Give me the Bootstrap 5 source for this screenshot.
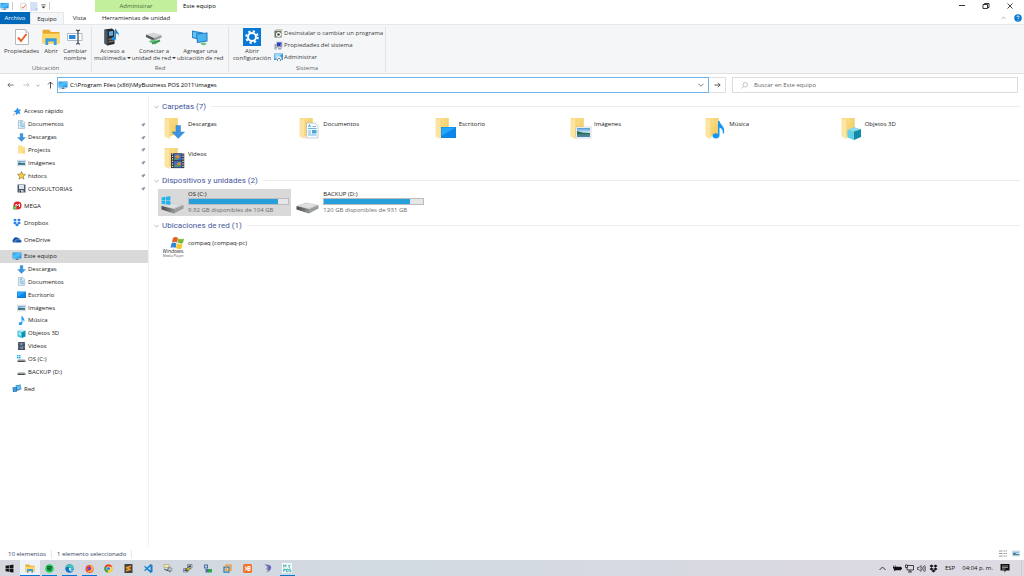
<!DOCTYPE html>
<html lang="es">
<head>
<meta charset="utf-8">
<meta name="viewport" content="width=device-width, initial-scale=1">
<title>Este equipo</title>
<link href="https://cdn.jsdelivr.net/npm/bootstrap@5.3.0/dist/css/bootstrap.min.css" rel="stylesheet">
<style>
  body { font-family: "Open Sans", "Noto Sans", sans-serif; font-size: 6px; line-height: 8px; color: #1a1a1a; background: #fff; }
  svg { display: block; flex: none; }
  button, input { font: inherit; color: inherit; }
  a { color: inherit; text-decoration: none; }
  h2 { font-family: Roboto, "Open Sans", sans-serif; font-size: 8px; line-height: 13px; font-weight: 400; color: #3f559d; margin: 0; }
  .plain { border: 0; background: transparent; padding: 0; }

  .titlebar, .tabs { height: 12px; }
  .quick { width: 95px; gap: 3px; }
  .ctx { width: 82px; background: #c1ef9b; color: #4b6a38; }
  .ctx-tab { width: 82px; }
  .win-title { padding-left: 6px; }
  .win-controls { padding-right: 2px; }
  .win-controls button { width: 24px; height: 12px; }
  .sep { width: 1px; height: 8px; background: #ccc; }
  .tab-file { width: 30px; background: #0068b8; color: #fff; }
  .tab-on { width: 34px; background: #f5f6f7; border: 1px solid #e4e5e6; border-bottom: 0; line-height: 10px; }
  .tab-view { width: 31px; }

  .ribbon { height: 50px; background: #f5f6f7; border-top: 1px solid #e6e7e8; border-bottom: 1px solid #e0e1e2; color: #3c3c3c; }
  .rgroup { border-right: 1px solid #e2e3e4; margin: 2px 0 1px; }
  .rbtn { line-height: 7px; display: flex; flex-direction: column; align-items: center; text-align: center; white-space: nowrap; padding-top: 1px; }
  .rbtn svg { margin-bottom: 2px; }
  .caret { display: inline-block; border: 2px solid transparent; border-top-color: #333; border-bottom: 0; vertical-align: 1px; margin-left: 1px; }
  .rlabel { color: #666; text-align: center; line-height: 8px; }
  .rrow { padding-left: 4px; gap: 3px; }
  .g1 { width: 92px; } .g2 { width: 137px; } .g3 { width: 157px; }
  .g2 .rrow { padding-left: 2px; gap: 1px; }
  .small-cmd { height: 12px; gap: 1px; }

  .addressbar { height: 23px; padding: 0 6px 1px 4px; }
  .nav-ico { width: 12px; height: 14px; }
  .nav-ico.fwd { margin-left: 4px; }
  .pathbox { height: 16px; border: 1px solid #6db5ee; margin-left: 1px; gap: 2px; }
  .pathbox input, .search input { border: 0; outline: 0; background: transparent; padding: 0; min-width: 0; }
  .go { width: 17px; height: 16px; border: 1px solid #e0e0e0; border-left: 0; }
  .search { width: 286px; height: 16px; border: 1px solid #dcdcdc; margin-left: 6px; gap: 6px; color: #666; }
  .search input::placeholder { color: #666; opacity: 1; }

  .side { width: 149px; border-right: 1px solid #f0f0f0; padding-top: 8px; gap: 4px; }
  .tree { display: grid; grid-auto-rows: 1fr; margin: 0; padding: 0; list-style: none; width: 148px; }
  .quick-tree { height: 90px; } .pc-tree { height: 128px; }
  .tree li { display: flex; }
  .tree a { flex: 1; display: flex; align-items: center; gap: 2px; padding: 0 2px 0 17px; min-height: 12px; }
  .tree a.top { padding-left: 12px; }
  .tree a.chosen { background: #d9d9d9; }
  .tree.single { height: 13px; }
  .pin { margin-left: auto; }

  .pane { padding: 3px 4px 0 5px; min-width: 0; }
  .sec { display: flex; align-items: center; gap: 3px; }
  .sec-line { flex: 1; height: 1px; background: #ececec; margin-left: 2px; }
  .tiles { display: grid; grid-template-columns: repeat(6, 1fr); padding: 0 50px 0 4px; }
  .folders { padding-bottom: 1px; }
  .tile { display: flex; gap: 1px; height: 30px; padding: 4px 0 0 5px; }
  .tile span { padding-top: 3px; }
  .drives { padding-top: 2px; padding-bottom: 3px; }
  .drive { display: flex; height: 27px; gap: 3px; padding: 1px 2px 0 3px; margin-right: 2px; }
  .drive.chosen { background: #d9d9d9; }
  .drive .progress { height: 7px; border-radius: 0; background: #e6e6e6; border: 1px solid #bcbcbc; margin: 0 0 1px; width: 101px; }
  .drive .progress-bar { background: #26a0da; }
  .free { color: #6a6a6a; }

  .status { height: 13px; color: #33455f; padding: 0 4px 0 8px; gap: 5px; }
  .status .sep { background: #e8e8e8; }
  .taskbar { height: 16px; background: linear-gradient(90deg, #d4d7df, #d2dae2 40%, #dad9e1 80%, #dfd9e2); }
  .apps { width: 297px; }
  .apps button { flex: 1 1 0; min-width: 0; display: flex; align-items: center; justify-content: center; }
  .apps .open { background: linear-gradient(#0078d7, #0078d7) center bottom / 15px 1px no-repeat; }
  .apps .front { background: linear-gradient(#0078d7, #0078d7) center bottom / 100% 1px no-repeat #edf1f8; }
  .tray { color: #111; gap: 3px; padding-right: 2px; }
</style>
</head>
<body>
<svg width="0" height="0" class="position-absolute" aria-hidden="true">
  <defs>
    <linearGradient id="scr" x1="0" y1="0" x2="1" y2="1"><stop offset="0" stop-color="#2a9df4"/><stop offset=".5" stop-color="#55c3fb"/><stop offset="1" stop-color="#1190ea"/></linearGradient>
    <linearGradient id="fold" x1="0" y1="0" x2="1" y2="1"><stop offset="0" stop-color="#fbe192"/><stop offset="1" stop-color="#f1c95c"/></linearGradient>
    <linearGradient id="metal" x1="0" y1="0" x2="1" y2="0"><stop offset="0" stop-color="#4a4a4a"/><stop offset="1" stop-color="#8d8d8d"/></linearGradient>
    <linearGradient id="sky" x1="0" y1="0" x2="0" y2="1"><stop offset="0" stop-color="#4f97dc"/><stop offset=".5" stop-color="#d7ecf9"/><stop offset=".55" stop-color="#3d7b57"/><stop offset="1" stop-color="#4c86b6"/></linearGradient>
  </defs>
  <symbol id="pc" viewBox="0 0 20 18"><path fill="#2b8fdc" d="M1 1h18v12H1z"/><path fill="url(#scr)" d="M2 2h16v10H2z"/><path fill="#5a7f9d" d="M8 13h4v2H8zM5 15h10v1H5z"/><path fill="#9fd8fb" d="M2 15h3v2H2z"/></symbol>
  <symbol id="check" viewBox="0 0 16 18"><path fill="#fff" stroke="#b4babf" d="M1.500 1.500h10l3 3v12h-13z"/><path fill="#dfe3e6" stroke="#b4babf" stroke-width=".6" d="M11.500 1.500v3h3"/><path fill="none" stroke="#e5602c" stroke-width="2" d="M4 9.500l3 3.500 5.500-7"/></symbol>
  <symbol id="down" viewBox="0 0 16 16"><path fill="#3a94e4" stroke="#2b7fcb" stroke-width=".6" d="M5.500 1h5v7H15l-7 7-7-7h4.500z"/></symbol>
  <symbol id="doc" viewBox="0 0 16 16"><path fill="#e4f1f8" stroke="#8ba3b2" d="M2.500 1h8l3 3v11h-11z"/><path stroke="#5aa6d6" d="M5 4.500h4M5 7h7M5 9h7M5 11h3"/><path fill="#7cbce4" d="M8 10h4v3H8zM6 2h3v3H6z"/></symbol>
  <symbol id="yfold" viewBox="0 0 16 16"><path fill="#ffe08a" d="M2 1h7l1 2h4v12H2z"/><path fill="#f6cf69" d="M11 9h3v6h-3z"/></symbol>
  <symbol id="photo" viewBox="0 0 18 14"><path fill="#fff" stroke="#9eabb5" d="M.5 1.500h17v11H.5z"/><path fill="url(#sky)" d="M2 3h14v8H2z"/><path fill="#2c6a8a" d="M2 7l4-1 5 2H2z"/></symbol>
  <symbol id="desk" viewBox="0 0 18 16"><path fill="#0a84e4" d="M0 1h18v13H0z"/><path fill="#27a5fb" d="M1 2h16L1 12z"/><path fill="#1c6fb5" d="M0 13h18v1H0z"/></symbol>
  <symbol id="note" viewBox="0 0 16 20"><path fill="#1297f2" d="M8 0h2c0 4 5 5 4.500 10-.2 2-1.500 3.500-1.500 3.500.5-4-1-5-3-6V16c0 5-8 5-8 1 0-3 4-4 6-2.500z"/></symbol>
  <symbol id="cube" viewBox="0 0 18 18"><path fill="#c7f1f8" d="M9 0l7 3-7 3-7-3z"/><path fill="#39bcd9" d="M1 3l9 3v12l-9-3z"/><path fill="#0b92b4" d="M17 3l-7 3v12l7-3z"/><path fill="#9fe8f5" d="M3 5l5 2v7l-5-2z"/></symbol>
  <symbol id="film" viewBox="0 0 16 18"><path fill="#32363c" d="M0 0h16v18H0z"/><path fill="#3c6fd4" d="M3.500 1h9v7.500h-9zM3.500 9.500h9V17h-9z"/><path fill="#d98a34" d="M4 4l4-2 3 2-3 3zM7 12l4-2 1 4-4 1z"/><path fill="#5f9a49" d="M4 6h4v2H4zM4 14h6v2H4z"/><path stroke="#dfe3e6" stroke-width="1.500" stroke-dasharray="1.500 1.500" d="M1.800 0v18M14.200 0v18"/></symbol>
  <symbol id="pinstar" viewBox="0 0 18 18"><path fill="#2c97e8" d="M10 1l2 4 5 0-3 4 2 5-5-1-4 3 0-5-5-2 5-3z"/><path stroke="#7b8a95" stroke-width="1.500" d="M1 17l5-5"/></symbol>
  <symbol id="star" viewBox="0 0 18 18"><path fill="#ffcf33" stroke="#7d6a30" stroke-width="1.200" d="M9 1l2.200 5.300 5.800.5-4.500 3.700 1.500 5.800L9 13.200 4 16.300l1.500-5.800L1 6.800l5.800-.5z"/></symbol>
  <symbol id="floppy" viewBox="0 0 18 18"><path fill="#4b5a6c" d="M1 1h16v16H1z"/><path fill="#dde3e9" d="M4 2h10v8H4z"/><path fill="#bcc5ce" d="M5 12h8v5H5z"/><path fill="#27323f" d="M6 13h2v4H6z"/></symbol>
  <symbol id="mega" viewBox="0 0 18 18"><circle cx="10" cy="9" r="8" fill="#e0202b"/><path fill="none" stroke="#fff" stroke-width="2" d="M7 11V6l3 3 4-3v6"/><circle cx="4.500" cy="13.500" r="4" fill="#53ad3f"/><path fill="none" stroke="#fff" d="M3 13l1.500 1.500L7 11.500"/></symbol>
  <symbol id="dropbox" viewBox="0 0 18 18"><path fill="currentColor" d="M5 1l4 3-4 3-4-3zM13 1l4 3-4 3-4-3zM5 7l4 3-4 3-4-3zM13 7l4 3-4 3-4-3zM9 11l4 3-4 3-4-3z"/></symbol>
  <symbol id="cloud" viewBox="0 0 20 14"><path fill="#1556a6" d="M3 12a4 4 0 0 1 0-7c1-4 7-5 9-2 3-1 4 2 4 3 4 1 4 6 1 6z"/><path fill="none" stroke="#fff" stroke-width=".8" d="M6.500 12c-2-3 1-6 4-5 2-3 6-2 6 1"/></symbol>
  <symbol id="hdd" viewBox="0 0 18 16"><path fill="#c4c8cb" d="M3 8h12l2 3H1z"/><path fill="#454c52" d="M1 11h16v3H1z"/><path fill="#72e06f" d="M14 12h1.500v1H14z"/></symbol>
  <symbol id="winlogo" viewBox="0 0 16 16"><path fill="currentColor" d="M1 3l6-.9v5.400H1zM8 2l7-1v6.500H8zM1 8.500h6v5.400L1 13zM8 8.500h7V15l-7-1z"/></symbol>
  <symbol id="netpc" viewBox="0 0 20 18"><path fill="#1d72b8" d="M7 3l10-2 2 9-9 4z"/><path fill="#62bff3" d="M8 4l9-2 1 7-8 3z"/><path fill="#1b65a5" d="M1 7l9-1v9l-8 1z"/><path fill="#3d9bdc" d="M2 8l7-1v7l-6 1z"/></symbol>
  <symbol id="pinico" viewBox="0 0 12 12"><path fill="#8799ac" d="M7 1l4 4-1 1-1 0-2 2 0 2-1 1-5-5 1-1 2 0 2-2z"/><path stroke="#8799ac" d="M1 11l4-4"/></symbol>
  <symbol id="base" viewBox="0 0 42 44"><path fill="#efc967" d="M4 2h25v34L4 38z"/><path fill="url(#fold)" d="M8 2h21v32H8z"/><path fill="#fce5a0" d="M3 2l10 5v37L3 39z"/><path fill="#f5d57d" d="M13 7l3-1v32l-3 6z"/></symbol>
  <symbol id="bigdrive" viewBox="0 0 46 26"><path fill="#cdcfd1" d="M1 10L20 3l25 5-19 8z"/><path fill="#dfe0e1" d="M6 10L21 5l18 3-14 6z"/><path fill="url(#metal)" d="M1 10l25 6v9L1 17z"/><path fill="#9b9ea1" d="M45 8v7L26 25v-9z"/><path fill="#71ce5b" d="M21 19l3 1v2l-3-1z"/></symbol>
  <symbol id="chev" viewBox="0 0 12 8"><path fill="none" stroke="currentColor" stroke-width="1.500" d="M1 1.500l5 5 5-5"/></symbol>
  <symbol id="arrow" viewBox="0 0 16 12"><path fill="none" stroke="currentColor" stroke-width="1.800" d="M1 6h13M9 1l5 5-5 5"/></symbol>
  <symbol id="explorer" viewBox="0 0 32 30"><path fill="#e9a92e" d="M1 2h12l3 4h15v20H1z"/><path fill="#ffd968" d="M1 9h30v18H1z"/><path fill="#3d9be3" d="M6 17h20v12h-5v-6h-10v6H6z"/></symbol>
</svg>

<div class="d-flex flex-column min-vh-100">
  <header>
    <div class="titlebar d-flex">
      <div class="quick d-flex align-items-center">
        <svg width="9" height="9"><use href="#pc"/></svg>
        <i class="sep"></i>
        <button class="plain ms-1" aria-label="Propiedades"><svg width="7" height="9"><use href="#check"/></svg></button>
        <button class="plain" aria-label="Nueva carpeta"><svg width="8" height="9" viewBox="0 0 16 18"><path fill="#d5e2f6" stroke="#c3d2ea" d="M1 1h13v16H1z"/><path fill="#b6c9e8" d="M11 12h4v5h-4z"/></svg></button>
        <button class="plain" aria-label="Personalizar"><svg width="5" height="6" viewBox="0 0 10 12"><path fill="#333" d="M1 3h8v1.500H1zM1 7h8l-4 4z"/></svg></button>
        <i class="sep"></i>
      </div>
      <div class="ctx d-flex align-items-center justify-content-center">Administrar</div>
      <div class="win-title d-flex align-items-center text-black flex-grow-1">Este equipo</div>
      <div class="win-controls d-flex">
        <button class="plain" aria-label="Minimizar"><svg class="m-auto" width="8" height="8" viewBox="0 0 8 8"><path stroke="#333" d="M1 3.500h6"/></svg></button>
        <button class="plain" aria-label="Restaurar"><svg class="m-auto" width="8" height="8" viewBox="0 0 16 16"><path fill="none" stroke="#222" stroke-width="1.800" d="M2 5h9v8H2zM5 5V3h9v8h-3"/></svg></button>
        <button class="plain" aria-label="Cerrar"><svg class="m-auto" width="8" height="8" viewBox="0 0 16 16"><path stroke="#222" stroke-width="1.700" d="M3 3l10 10M13 3L3 13"/></svg></button>
      </div>
    </div>
    <div class="tabs d-flex">
      <button class="plain tab-file">Archivo</button>
      <button class="tab-on p-0">Equipo</button>
      <button class="plain tab-view">Vista</button>
      <button class="plain ctx-tab">Herramientas de unidad</button>
      <div class="win-controls ms-auto d-flex align-items-center gap-2">
        <svg width="5" height="4" viewBox="0 0 12 8"><path fill="none" stroke="#888" stroke-width="1.500" d="M1 6.500l5-5 5 5"/></svg>
        <svg width="8" height="8" viewBox="0 0 16 16"><circle cx="8" cy="8" r="7.500" fill="#0a78d1"/><path fill="none" stroke="#fff" stroke-width="1.600" d="M5.500 6c0-3 5-3 5 0 0 1.500-2.500 1.500-2.500 4M8 11.500v1.500"/></svg>
      </div>
    </div>
    <div class="ribbon d-flex">
      <section class="rgroup g1 d-flex flex-column">
        <div class="rrow d-flex flex-grow-1 align-items-start">
          <button class="plain rbtn"><svg width="18" height="18"><use href="#check"/></svg>Propiedades</button>
          <button class="plain rbtn"><svg width="18" height="18"><use href="#explorer"/></svg>Abrir</button>
          <button class="plain rbtn"><svg width="18" height="18" viewBox="0 0 36 36"><path fill="#fff" stroke="#9aa7b3" stroke-width="1.500" d="M3 11h29v14H3z"/><path fill="#2a86d6" d="M6 14h13v8H6z"/><path fill="none" stroke="#444f5a" stroke-width="2.500" d="M20 4c3 0 4 1 4 3v22c0 2-1 3-4 3M28 4c-3 0-4 1-4 3M28 32c-3 0-4-1-4-3"/></svg>Cambiar<br>nombre</button>
        </div>
        <div class="rlabel">Ubicación</div>
      </section>
      <section class="rgroup g2 d-flex flex-column">
        <div class="rrow d-flex flex-grow-1 align-items-start">
          <button class="plain rbtn"><svg width="18" height="18" viewBox="0 0 36 36"><path fill="#252b31" d="M3 3l15-2 5 4v27l-14 3-6-4z"/><path fill="#4c5963" d="M3 3l6 3v29l-6-4z"/><path fill="#69a9dd" d="M12 7l8-1v9l-8 1z"/><path fill="#8c6d55" d="M11 21l10-1v3l-10 1zM11 26l10-1v3l-10 1z"/><path fill="#178ce2" d="M24 2h2c0 5 8 6 6 16 0-5-2-7-6-7v10c0 5-9 5-9 1s4-5 7-3z"/></svg>Acceso a<br><span>multimedia<i class="caret"></i></span></button>
          <button class="plain rbtn"><svg width="18" height="18" viewBox="0 0 36 36"><path fill="#d3d6d8" d="M2 13l15-4 16 5-15 6z"/><path fill="#55595d" d="M2 13l16 7v6L2 18z"/><path fill="#999da0" d="M33 14v5l-15 7v-6z"/><path fill="#6cc07e" d="M7 27l8-4 14 4-9 6z"/><path stroke="#3b9a50" stroke-width="4" d="M14 31l16-6"/></svg>Conectar a<br><span>unidad de red<i class="caret"></i></span></button>
          <button class="plain rbtn"><svg width="18" height="18" viewBox="0 0 36 36"><path fill="#2685cb" d="M2 5l22 4v16L2 20z"/><path fill="#68c6f4" d="M4 8l18 3v11L4 18z"/><path fill="#1f7bc1" d="M10 11l23-2v18l-21 3z"/><path fill="#4ab4ef" d="M12 13l19-2v14l-17 3z"/><path fill="#6cc07e" d="M18 31l8-2 6 3-7 3z"/></svg>Agregar una<br>ubicación de red</button>
        </div>
        <div class="rlabel">Red</div>
      </section>
      <section class="rgroup g3 d-flex flex-column">
        <div class="rrow d-flex flex-grow-1 align-items-start">
          <button class="plain rbtn"><svg width="18" height="18" viewBox="0 0 36 36"><path fill="#0a78d6" d="M0 0h36v36H0z"/><circle cx="18" cy="18" r="8" fill="none" stroke="#fff" stroke-width="4"/><circle cx="18" cy="18" r="11.500" fill="none" stroke="#fff" stroke-width="4" stroke-dasharray="4.500 4.530"/></svg>Abrir<br>configuración</button>
          <div class="d-flex flex-column">
            <button class="plain small-cmd d-flex align-items-center"><svg width="9" height="9" viewBox="0 0 18 18"><path fill="#65735f" d="M1 3h14v14H1z"/><path fill="#c5cdb9" d="M4 0h13v4H4z"/><circle cx="9" cy="11" r="5" fill="#fff"/><circle cx="9" cy="11" r="2.500" fill="#39473b"/></svg>Desinstalar o cambiar un programa</button>
            <button class="plain small-cmd d-flex align-items-center"><svg width="9" height="9" viewBox="0 0 18 18"><path fill="#c7cbd4" d="M4 1h13v13H4z"/><path fill="#253fc3" d="M6 3h9v8H6z"/><path fill="#a0a6b4" d="M1 6h4v11H1zM8 14h7v3H8z"/><path stroke="#fff" d="M9 9l2 2 3-5"/></svg>Propiedades del sistema</button>
            <button class="plain small-cmd d-flex align-items-center"><svg width="9" height="9" viewBox="0 0 18 18"><path fill="#3597d7" d="M0 1h18v13H0z"/><path fill="#9cd9fb" d="M1 2h16L1 12z"/><path fill="#eef1f2" d="M5 10c0-5 10-5 10 0v7H5z"/><path fill="none" stroke="#4d5b66" stroke-width="1.500" d="M7 16v-3l3-3 3 3v3"/></svg>Administrar</button>
          </div>
        </div>
        <div class="rlabel">Sistema</div>
      </section>
    </div>
    <div class="addressbar d-flex align-items-center">
      <button class="plain nav-ico" aria-label="Atrás"><svg class="m-auto" width="7" height="6" viewBox="0 0 16 12" color="#555"><path fill="none" stroke="currentColor" stroke-width="1.800" d="M15 6H2M7 1L2 6l5 5"/></svg></button>
      <button class="plain nav-ico fwd" aria-label="Adelante"><svg class="m-auto" width="7" height="6" color="#bbb"><use href="#arrow"/></svg></button>
      <button class="plain nav-ico" aria-label="Recientes"><svg class="m-auto" width="4" height="3" color="#555"><use href="#chev"/></svg></button>
      <button class="plain nav-ico" aria-label="Subir"><svg class="m-auto" width="7" height="8" viewBox="0 0 14 16"><path fill="none" stroke="#444" stroke-width="1.800" d="M7 15V2M2 7l5-5 5 5"/></svg></button>
      <div class="pathbox d-flex align-items-center flex-grow-1">
        <svg width="10" height="9"><use href="#pc"/></svg>
        <input class="flex-grow-1 text-black" aria-label="Dirección" value="C:\Program Files (x86)\MyBusiness POS 2011\images">
        <button class="plain pe-1" aria-label="Ver historial"><svg width="6" height="4" color="#555"><use href="#chev"/></svg></button>
      </div>
      <button class="go bg-white p-0" aria-label="Ir"><svg class="m-auto" width="7" height="6" color="#333"><use href="#arrow"/></svg></button>
      <div class="search d-flex align-items-center">
        <svg class="ms-2" width="7" height="7" viewBox="0 0 14 14"><g fill="none" stroke="#888"><circle cx="8.500" cy="5.500" r="4.500"/><path d="M5 9l-4 4"/></g></svg>
        <input class="flex-grow-1" type="search" aria-label="Buscar" placeholder="Buscar en Este equipo">
      </div>
    </div>
  </header>

  <div class="d-flex flex-grow-1">
    <nav class="side d-flex flex-column flex-shrink-0" aria-label="Panel de navegación">
      <ul class="tree quick-tree">
        <li><a class="top" href="#"><svg width="10" height="9"><use href="#pinstar"/></svg>Acceso rápido</a></li>
        <li><a href="#"><svg width="9" height="9"><use href="#doc"/></svg>Documentos<svg class="pin" width="5" height="5"><use href="#pinico"/></svg></a></li>
        <li><a href="#"><svg width="9" height="9"><use href="#down"/></svg>Descargas<svg class="pin" width="5" height="5"><use href="#pinico"/></svg></a></li>
        <li><a href="#"><svg width="9" height="9"><use href="#yfold"/></svg>Projects<svg class="pin" width="5" height="5"><use href="#pinico"/></svg></a></li>
        <li><a href="#"><svg width="9" height="8"><use href="#photo"/></svg>Imágenes<svg class="pin" width="5" height="5"><use href="#pinico"/></svg></a></li>
        <li><a href="#"><svg width="9" height="9"><use href="#star"/></svg>htdocs<svg class="pin" width="5" height="5"><use href="#pinico"/></svg></a></li>
        <li><a href="#"><svg width="9" height="9"><use href="#floppy"/></svg>CONSULTORIAS<svg class="pin" width="5" height="5"><use href="#pinico"/></svg></a></li>
      </ul>
      <ul class="tree single"><li><a class="top" href="#"><svg width="10" height="9"><use href="#mega"/></svg>MEGA</a></li></ul>
      <ul class="tree single"><li><a class="top" href="#"><svg width="10" height="9" color="#2583e6"><use href="#dropbox"/></svg>Dropbox</a></li></ul>
      <ul class="tree single"><li><a class="top" href="#"><svg width="10" height="8"><use href="#cloud"/></svg>OneDrive</a></li></ul>
      <ul class="tree pc-tree">
        <li><a class="top chosen" href="#"><svg width="10" height="9"><use href="#pc"/></svg>Este equipo</a></li>
        <li><a href="#"><svg width="9" height="9"><use href="#down"/></svg>Descargas</a></li>
        <li><a href="#"><svg width="9" height="9"><use href="#doc"/></svg>Documentos</a></li>
        <li><a href="#"><svg width="9" height="8"><use href="#desk"/></svg>Escritorio</a></li>
        <li><a href="#"><svg width="9" height="8"><use href="#photo"/></svg>Imágenes</a></li>
        <li><a href="#"><svg width="9" height="9"><use href="#note"/></svg>Música</a></li>
        <li><a href="#"><svg width="9" height="9"><use href="#cube"/></svg>Objetos 3D</a></li>
        <li><a href="#"><svg width="9" height="8"><use href="#film"/></svg>Vídeos</a></li>
        <li><a href="#"><svg width="9" height="8" viewBox="0 0 18 16"><use href="#hdd" width="18" height="16"/><path fill="#1fb0ea" d="M0 0h3v3H0zM4 0h3v3H4zM0 4h3v3H0zM4 4h3v3H4z"/></svg>OS (C:)</a></li>
        <li><a href="#"><svg width="9" height="8"><use href="#hdd"/></svg>BACKUP (D:)</a></li>
      </ul>
      <ul class="tree single"><li><a class="top" href="#"><svg width="10" height="9"><use href="#netpc"/></svg>Red</a></li></ul>
    </nav>

    <main class="pane flex-grow-1">
      <div class="sec"><svg width="5" height="4" color="#888"><use href="#chev"/></svg><h2>Carpetas (7)</h2><i class="sec-line"></i></div>
      <div class="tiles folders">
        <a class="tile" href="#"><svg width="24" height="24" viewBox="0 0 48 48"><use href="#base" width="42" height="44"/><path fill="#3a94e4" stroke="#2b80cf" d="M26 17h9v13h8L30.500 43 18 30h8z"/></svg><span>Descargas</span></a>
        <a class="tile" href="#"><svg width="24" height="24" viewBox="0 0 48 48"><use href="#base" width="42" height="44"/><path fill="#f8fbfd" stroke="#93a4b0" d="M17 12h17l6 6v24H17z"/><path stroke="#3d9ed4" stroke-width="1.500" d="M29 19h7M20 23h17M20 28h6M20 32h6M20 36h17"/><path fill="#4ba4dc" d="M28 26h9v7h-9zM20 20l3-6 3 6h-2l-1-2-1 2z"/></svg><span>Documentos</span></a>
        <a class="tile" href="#"><svg width="24" height="24" viewBox="0 0 48 48"><use href="#base" width="42" height="44"/><path fill="#0b86e8" d="M14 20h30v22H14z"/><path fill="#23a7fa" d="M15 21h28L15 38z"/></svg><span>Escritorio</span></a>
        <a class="tile" href="#"><svg width="24" height="24" viewBox="0 0 48 48"><use href="#base" width="42" height="44"/><path fill="#fff" stroke="#aab2ba" d="M14 20h30v22H14z"/><path fill="url(#sky)" d="M16 22h26v18H16z"/><path fill="#2b6d56" d="M16 28l11 3 15 1v2H16z"/></svg><span>Imágenes</span></a>
        <a class="tile" href="#"><svg width="24" height="24" viewBox="0 0 48 48"><use href="#base" width="42" height="44"/><path fill="#1297f2" d="M28 8h3c1 8 12 10 9 24l-2 2c0-8-2-11-7-13v16c0 8-14 7-14 1 0-5 7-7 11-4z"/></svg><span>Música</span></a>
        <a class="tile" href="#"><svg width="24" height="24" viewBox="0 0 48 48"><use href="#base" width="42" height="44"/><path fill="#88deef" d="M28 20l13 4-13 5-12-4z"/><path fill="#5fd0e6" d="M15 25l13 4v17l-13-5z"/><path fill="#138aab" d="M42 24l-14 5v17l14-6z"/></svg><span>Objetos 3D</span></a>
        <a class="tile" href="#"><svg width="24" height="24" viewBox="0 0 48 48"><use href="#base" width="42" height="44"/><use href="#film" x="16" y="12" width="27" height="31"/></svg><span>Vídeos</span></a>
      </div>
      <div class="sec"><svg width="5" height="4" color="#888"><use href="#chev"/></svg><h2>Dispositivos y unidades (2)</h2><i class="sec-line"></i></div>
      <div class="tiles drives">
        <a class="drive chosen" href="#"><svg width="24" height="25" viewBox="0 0 48 50"><svg y="22" width="46" height="26"><use href="#bigdrive"/></svg><svg x="0" y="11" width="20" height="20" color="#20b3ef"><use href="#winlogo"/></svg></svg>
          <div><div>OS (C:)</div><div class="progress" role="progressbar" aria-label="Espacio usado en C" aria-valuenow="90" aria-valuemin="0" aria-valuemax="100"><div class="progress-bar" style="width:90%"></div></div><div class="free text-nowrap">9.92 GB disponibles de 104 GB</div></div></a>
        <a class="drive" href="#"><svg width="24" height="25" viewBox="0 0 48 50"><svg y="22" width="46" height="26"><use href="#bigdrive"/></svg></svg>
          <div><div>BACKUP (D:)</div><div class="progress" role="progressbar" aria-label="Espacio usado en D" aria-valuenow="87" aria-valuemin="0" aria-valuemax="100"><div class="progress-bar" style="width:87%"></div></div><div class="free text-nowrap">120 GB disponibles de 931 GB</div></div></a>
      </div>
      <div class="sec"><svg width="5" height="4" color="#888"><use href="#chev"/></svg><h2>Ubicaciones de red (1)</h2><i class="sec-line"></i></div>
      <div class="tiles">
        <a class="tile" href="#"><svg width="24" height="24" viewBox="0 0 48 48"><path fill="#e85c24" d="M20 4c4-3 7-2 10 0l-2 9c-4-2-7-2-10 0z"/><path fill="#79b833" d="M31 5c4 2 7 2 11 0l-2 9c-4 2-8 1-11-1z"/><path fill="#2f87d7" d="M17 15c4-3 7-2 10 0l-2 9c-4-2-7-2-10 0z"/><path fill="#f7c52b" d="M28 15c4 2 8 2 11 1l-2 9c-4 2-8 1-11-1z"/><text x="-2" y="34" font-size="10" fill="#222">Windows</text><text x="-1" y="41" font-size="7" fill="#555">Media Player</text></svg><span>compaq (compaq-pc)</span></a>
      </div>
    </main>
  </div>

  <footer>
    <div class="status d-flex align-items-center">
      <span>10 elementos</span><i class="sep"></i><span>1 elemento seleccionado</span><i class="sep"></i>
      <button class="plain ms-auto" aria-label="Detalles"><svg width="8" height="7" viewBox="0 0 16 14"><path fill="none" stroke="#777" stroke-width="1.500" d="M0 2h7M9 2h3M13 2h3M0 7h7M9 7h3M13 7h3M0 12h7M9 12h3M13 12h3"/></svg></button>
      <button class="plain" aria-label="Iconos grandes"><svg width="8" height="7"><use href="#photo"/></svg></button>
    </div>
    <div class="taskbar d-flex">
      <div class="apps d-flex">
        <button class="plain" aria-label="Inicio"><svg width="9" height="9" color="#111"><use href="#winlogo"/></svg></button>
        <button class="plain front" aria-label="Explorador"><svg width="10" height="9"><use href="#explorer"/></svg></button>
        <button class="plain open" aria-label="Spotify"><svg width="9" height="9" viewBox="0 0 18 18"><circle cx="9" cy="9" r="8.500" fill="#1ed05e"/><path fill="none" stroke="#111" stroke-width="1.800" d="M4 6c4-1 7-1 10 1M4.500 9c3-1 6-1 8.500 1M5 12c3-1 5 0 7 1"/></svg></button>
        <button class="plain open" aria-label="Edge"><svg width="9" height="9" viewBox="0 0 18 18"><circle cx="9" cy="9" r="8.500" fill="#1275c5"/><path fill="#42c9b5" d="M1 7C3-1 16-1 17.500 7c0 4-4 5-6 4 2-5-5-7-10-4z"/><path fill="#d9edf8" d="M8 7c4 0 5 3 3 4 2 3 4 2 6 0-3 7-11 3-9-4z"/></svg></button>
        <button class="plain open" aria-label="Firefox"><svg width="9" height="9" viewBox="0 0 18 18"><circle cx="9" cy="10" r="8" fill="#f04a3e"/><path fill="#ffb530" d="M10 0c6 3 7 8 6 12-2 5-9 6-12 2 6 1 9-2 8-6 0-3-2-5-2-8z"/><circle cx="9" cy="9" r="3.500" fill="#7640cf"/></svg></button>
        <button class="plain" aria-label="Chrome"><svg width="9" height="9" viewBox="0 0 18 18"><circle cx="9" cy="9" r="8.500" fill="#fbc928"/><path fill="#e24435" d="M9 9L1.500 5C5-1.500 14-1 16.700 5.500H9z"/><path fill="#279f51" d="M9 9l-2 8.300C1 16-1 9 1.500 5z"/><circle cx="9" cy="9" r="4.200" fill="#fff"/><circle cx="9" cy="9" r="3.200" fill="#3479dd"/></svg></button>
        <button class="plain" aria-label="Sublime Text"><svg width="9" height="9" viewBox="0 0 18 18"><path fill="#444" d="M1 0h16v18H1z"/><path fill="#ff9b20" d="M4 6l10-3v3L9 8l5 2v2L4 15v-3l5-2-5-1z"/></svg></button>
        <button class="plain" aria-label="Visual Studio Code"><svg width="9" height="9" viewBox="0 0 18 18"><path fill="#1780ce" d="M13 0l4 2v14l-4 2-7-7-4 3-2-1 4-4-4-4 2-1 4 3zm0 5L8 9l5 4z"/></svg></button>
        <button class="plain" aria-label="Base de datos"><svg width="10" height="9" viewBox="0 0 20 18"><path fill="#f4e9a5" stroke="#948e68" d="M2 1h10v6H2z"/><path stroke="#596874" stroke-width="2" d="M2 10l14 6M6 14l8-9"/><path fill="#c5d0d5" stroke="#69757d" d="M11 8h7v5h-7z"/></svg></button>
        <button class="plain" aria-label="PuTTY"><svg width="10" height="9" viewBox="0 0 20 18"><path fill="#d2d6d7" stroke="#414a53" d="M9 1h9v7H9zM1 9h9v7H1z"/><path fill="#273c7c" d="M11 3h5v3h-5zM3 11h5v3H3z"/><path fill="#f3cf28" stroke="#4a451e" d="M12 6L5 10l5 1-2 4 8-6-5-1z"/></svg></button>
        <button class="plain" aria-label="WinSCP"><svg width="10" height="9" viewBox="0 0 20 18"><path fill="#4b719f" d="M2 1h8v8H2zM5 10h7v7H5z"/><path fill="#bed1e2" d="M4 3h4v4H4z"/><path fill="#32ac45" d="M11 10h7v7h-7z"/></svg></button>
        <button class="plain" aria-label="VMware"><svg width="9" height="9" viewBox="0 0 18 18"><path fill="none" stroke="#277fb5" stroke-width="2.500" d="M2 6h10v10H2z"/><path fill="none" stroke="#f3952d" stroke-width="2.500" d="M6 2h10v10H6z"/></svg></button>
        <button class="plain" aria-label="XAMPP"><svg width="9" height="9" viewBox="0 0 18 18"><rect width="18" height="18" rx="3" fill="#ef732b"/><path fill="none" stroke="#fff" stroke-width="2" d="M4 5l5 8M9 5l-5 8M10 5h4v8h-4zM9 9h5"/></svg></button>
        <button class="plain" aria-label="Editor"><svg width="9" height="9" viewBox="0 0 18 18"><path fill="#6b69b5" d="M3 1c12-1 16 4 12 10-2 4-6 5-9 6l5-5H6l5-3H5l5-3z"/></svg></button>
        <button class="plain open" aria-label="MyBusiness POS"><svg width="10" height="10" viewBox="0 0 18 18"><path fill="#f8ffff" d="M0 0h18v18H0z"/><path fill="none" stroke="#38a8aa" stroke-width="1.500" d="M3 8V3l2 3 2-3v5M11 3l2 3 2-3M13 6v3M3 16v-5h3v2H3M8 11h3v5H8zM16 11h-3v2h3v3h-3"/></svg></button>
      </div>
      <div class="tray d-flex align-items-center ms-auto">
        <button class="plain me-1" aria-label="Iconos ocultos"><svg width="7" height="5" viewBox="0 0 14 10"><path fill="none" stroke="#222" stroke-width="1.800" d="M1 8l6-6 6 6"/></svg></button>
        <button class="plain" aria-label="Batería"><svg width="9" height="8" viewBox="0 0 20 16"><path fill="#111" d="M5 5h13v8H5zM18 7h2v4h-2zM1 2h1v3H1zM5 2h1v3H5zM0 5h7v3l-2 2v4H2v-4L0 8z"/></svg></button>
        <button class="plain" aria-label="Red"><svg width="9" height="9" viewBox="0 0 18 18"><path fill="none" stroke="#111" stroke-width="1.500" d="M5 3h12v9H4V7M10 12v4M6 16h8M1 2h4v5H1z"/></svg></button>
        <button class="plain" aria-label="Volumen"><svg width="9" height="9" viewBox="0 0 18 18"><path fill="none" stroke="#111" stroke-width="1.200" d="M1 7h3l4-4v12l-4-4H1zM10 6q2 3 0 6M12.500 4q4 5 0 10M15 2q5 7 0 14"/></svg></button>
        <button class="plain me-1" aria-label="Dropbox"><svg width="9" height="9"><use href="#dropbox"/></svg></button>
        <button class="plain me-1">ESP</button>
        <button class="plain me-1 text-nowrap">04:04 p. m.</button>
        <button class="plain" aria-label="Notificaciones"><svg width="10" height="10" viewBox="0 0 20 20"><path fill="#111" d="M1 2h18v13h-7l-3 4v-4H1z"/><path stroke="#ddd" stroke-width="1.200" d="M4 6h12M4 9h12M4 12h7"/></svg></button>
        <i class="sep h-100 ms-2"></i>
      </div>
    </div>
  </footer>
</div>
<script src="https://cdn.jsdelivr.net/npm/bootstrap@5.3.0/dist/js/bootstrap.bundle.min.js"></script>
</body>
</html>
